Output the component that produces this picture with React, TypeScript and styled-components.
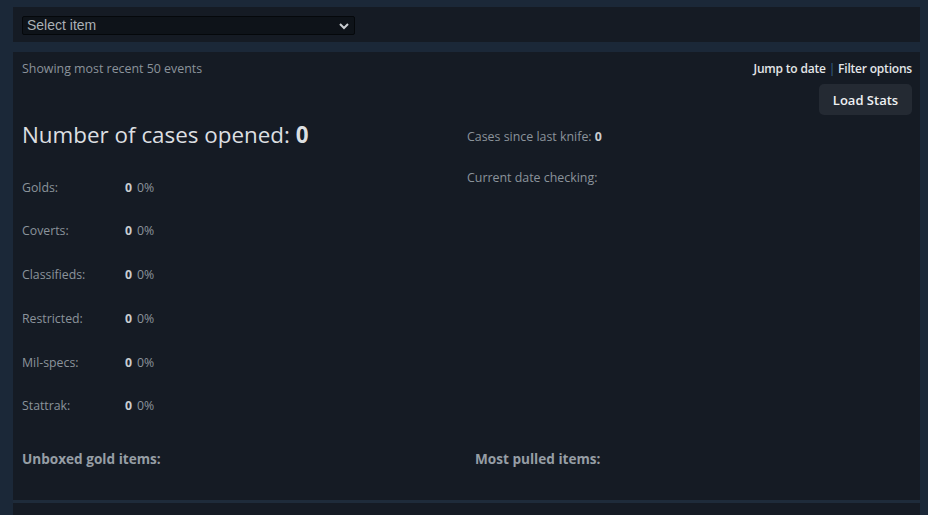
import React from "react";
import styled, { createGlobalStyle } from "styled-components";

const Global = createGlobalStyle`
  html, body { margin: 0; padding: 0; background: #1b2838; }
  body { font-family: "Open Sans", "Noto Sans", Arial, sans-serif; }
`;

const Page = styled.div`
  width: 928px;
  height: 515px;
  box-sizing: border-box;
  padding: 7px 8px 0 13px;
  overflow: hidden;
  display: flex;
  flex-direction: column;
  background: #1b2838;
`;

const TopBar = styled.div`
  background: #151b24;
  height: 35px;
  box-sizing: border-box;
  padding: 9px 9px;
  display: flex;
  align-items: flex-start;
`;

const SelectWrap = styled.div`
  position: relative;
  width: 333px;
  height: 19px;
`;

const Select = styled.select`
  display: block;
  margin: 0;
  appearance: none;
  width: 100%;
  height: 19px;
  box-sizing: border-box;
  background: #0e1319;
  border: 1px solid #05080b;
  border-radius: 2px;
  color: #aab0b5;
  font-family: "Liberation Sans", Arial, sans-serif;
  font-size: 14px;
  padding: 0 0 0 4px;
  line-height: 17px;
  outline: none;
`;

const Chevron = styled.svg`
  position: absolute;
  right: 6px;
  top: 6px;
  pointer-events: none;
`;

const Panel = styled.div`
  margin-top: 10px;
  background: #151b24;
  height: 448px;
  box-sizing: border-box;
  padding: 8px 8px 0 9px;
  display: flex;
  flex-direction: column;
`;

const Divider = styled.div`
  height: 3px;
  background: #1e2b3a;
`;

const NextPanel = styled.div`
  flex: 1;
  background: #151b24;
`;

const HeaderRow = styled.div`
  display: flex;
  justify-content: space-between;
  align-items: center;
  height: 16px;
`;

const Muted = styled.span`
  color: #8b939b;
  font-size: 12.4px;
`;

const Links = styled.div`
  font-size: 12px;
  font-weight: 600;
  color: #e3e6e8;
  letter-spacing: -0.2px;
`;

const Sep = styled.span`
  color: #3a6a8c;
  font-weight: 400;
  margin: 0 3px;
`;

const ButtonRow = styled.div`
  display: flex;
  justify-content: flex-end;
  margin-top: 8px;
`;

const Button = styled.button`
  background: #242a33;
  color: #eef0f2;
  border: none;
  border-radius: 5px;
  width: 93px;
  height: 31px;
  font-family: "Open Sans", "Noto Sans", Arial, sans-serif;
  font-size: 13px;
  font-weight: 600;
  padding: 0;
`;

const Columns = styled.div`
  display: grid;
  grid-template-columns: 1fr 1fr;
  margin-top: 5px;
`;

const Col = styled.div`
  display: flex;
  flex-direction: column;
`;

const Heading = styled.div`
  color: #dcdfe1;
  font-size: 22.4px;
  line-height: 30px;
  height: 30px;
  b { font-weight: 700; }
`;

const StatList = styled.div`
  margin-top: 29px;
  display: flex;
  flex-direction: column;
  gap: 27.8px;
`;

const StatLine = styled.div`
  display: flex;
  align-items: center;
  height: 16px;
  font-size: 12.3px;
`;

const Label = styled.span`
  width: 103px;
  color: #8b939b;
`;

const Count = styled.b`
  color: #c9cdd1;
  font-weight: 700;
  margin-right: 5px;
`;

const Pct = styled.span`
  color: #8b939b;
`;

const SideText = styled.div<{ $top: number }>`
  margin-top: ${(p) => p.$top}px;
  font-size: 12.4px;
  line-height: 16px;
  color: #8b939b;
  b { color: #c9cdd1; font-weight: 700; }
`;

const Footer = styled.div`
  display: grid;
  grid-template-columns: 1fr 1fr;
  margin-top: 35px;
`;

const SubHeading = styled.div<{ $indent?: number }>`
  padding-left: ${(p) => p.$indent ?? 0}px;
  font-size: 13.6px;
  font-weight: 700;
  line-height: 20px;
  color: #969ea5;
`;

const stats = ["Golds:", "Coverts:", "Classifieds:", "Restricted:", "Mil-specs:", "Stattrak:"];

export default function App() {
  return (
    <>
      <Global />
      <Page>
        <TopBar>
          <SelectWrap>
            <Select defaultValue="">
              <option value="">Select item</option>
            </Select>
            <Chevron width="10" height="8" viewBox="0 0 10 8">
              <path d="M1 2 L5 6 L9 2" stroke="#c9cdd1" strokeWidth="2" fill="none" />
            </Chevron>
          </SelectWrap>
        </TopBar>
        <Panel>
          <HeaderRow>
            <Muted>Showing most recent 50 events</Muted>
            <Links>
              Jump to date<Sep>|</Sep>Filter options
            </Links>
          </HeaderRow>
          <ButtonRow>
            <Button>Load Stats</Button>
          </ButtonRow>
          <Columns>
            <Col>
              <Heading>
                Number of cases opened: <b>0</b>
              </Heading>
              <StatList>
                {stats.map((s) => (
                  <StatLine key={s}>
                    <Label>{s}</Label>
                    <Count>0</Count>
                    <Pct>0%</Pct>
                  </StatLine>
                ))}
              </StatList>
            </Col>
            <Col>
              <SideText $top={9}>
                Cases since last knife: <b>0</b>
              </SideText>
              <SideText $top={25}>Current date checking:</SideText>
            </Col>
          </Columns>
          <Footer>
            <SubHeading>Unboxed gold items:</SubHeading>
            <SubHeading $indent={8}>Most pulled items:</SubHeading>
          </Footer>
        </Panel>
        <Divider />
        <NextPanel />
      </Page>
    </>
  );
}
